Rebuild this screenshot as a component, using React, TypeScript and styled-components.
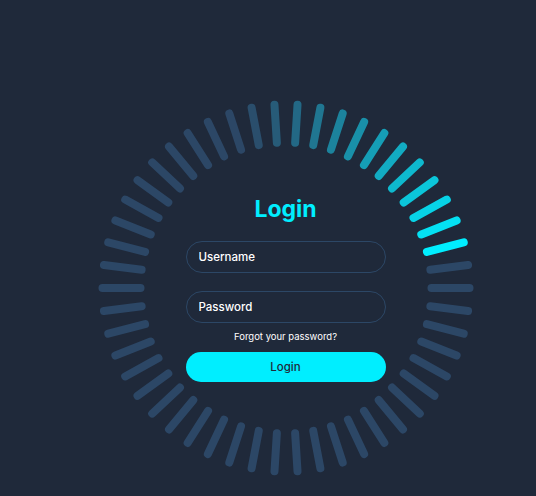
import React from 'react'
import styled, { createGlobalStyle } from 'styled-components'

const BASE = [44, 71, 102]
const BRIGHT = [0, 238, 255]
const BARS = 50
const STEP = 360 / BARS
// the bar that just lit up, in degrees clockwise from 3 o'clock
const HEAD = -2 * STEP
const FADE = 12.5

const GlobalStyle = createGlobalStyle`
  html, body {
    margin: 0;
    padding: 0;
    background: #1f293a;
    font-family: Inter, "Open Sans", sans-serif;
  }
  * {
    box-sizing: border-box;
  }
`

const Page = styled.div`
  width: 536px;
  height: 496px;
  overflow: hidden;
`

const Stage = styled.div`
  display: grid;
  width: 400px;
  height: 400px;
  margin: 88px 0 0 85.5px;
`

const Ring = styled.svg`
  grid-area: 1 / 1;
  width: 400px;
  height: 400px;
`

const Form = styled.form`
  grid-area: 1 / 1;
  align-self: center;
  justify-self: center;
  width: 200px;
  display: flex;
  flex-direction: column;
`

const Title = styled.h2`
  margin: 0 0 18px;
  font-size: 23px;
  line-height: 28px;
  font-weight: 700;
  color: #00eeff;
  text-align: center;
`

const Field = styled.input`
  width: 100%;
  height: 32px;
  padding: 0 12px;
  border: 1px solid #2c4766;
  border-radius: 16px;
  background: transparent;
  color: #fff;
  font-family: inherit;
  font-size: 11.5px;
  font-weight: 500;
  outline: none;

  &::placeholder {
    color: #fff;
  }

  & + & {
    margin-top: 18px;
  }
`

const Forgot = styled.a`
  margin: 8px 0 9px;
  font-size: 9.5px;
  line-height: 12px;
  color: #fff;
  text-align: center;
  text-decoration: none;
`

const Button = styled.button`
  width: 100%;
  height: 30px;
  border: none;
  border-radius: 15px;
  background: #00eeff;
  color: #1f293a;
  font-family: inherit;
  font-size: 11.5px;
  font-weight: 500;
`

function barColor(angle: number) {
  let behind = ((HEAD - angle) % 360 + 360) % 360 / STEP
  behind = Math.round(behind * 10) / 10
  const f = Math.max(0, 1 - behind / FADE)
  const c = BASE.map((b, i) => Math.round(b + (BRIGHT[i] - b) * f))
  return `rgb(${c[0]}, ${c[1]}, ${c[2]})`
}

function Spinner() {
  const bars = Array.from({ length: BARS }, (_, i) => {
    const angle = i * STEP
    const rad = (angle * Math.PI) / 180
    const cos = Math.cos(rad)
    const sin = Math.sin(rad)
    return (
      <line
        key={i}
        x1={200 + 145.5 * cos}
        y1={200 + 145.5 * sin}
        x2={200 + 183.5 * cos}
        y2={200 + 183.5 * sin}
        stroke={barColor(angle)}
        strokeWidth={8}
        strokeLinecap="round"
      />
    )
  })
  return (
    <Ring viewBox="0 0 400 400">
      {bars}
    </Ring>
  )
}

export default function App() {
  return (
    <Page>
      <GlobalStyle />
      <Stage>
        <Spinner />
        <Form onSubmit={e => e.preventDefault()}>
          <Title>Login</Title>
          <Field type="text" placeholder="Username" />
          <Field type="password" placeholder="Password" />
          <Forgot href="#">Forgot your password?</Forgot>
          <Button type="submit">Login</Button>
        </Form>
      </Stage>
    </Page>
  )
}
